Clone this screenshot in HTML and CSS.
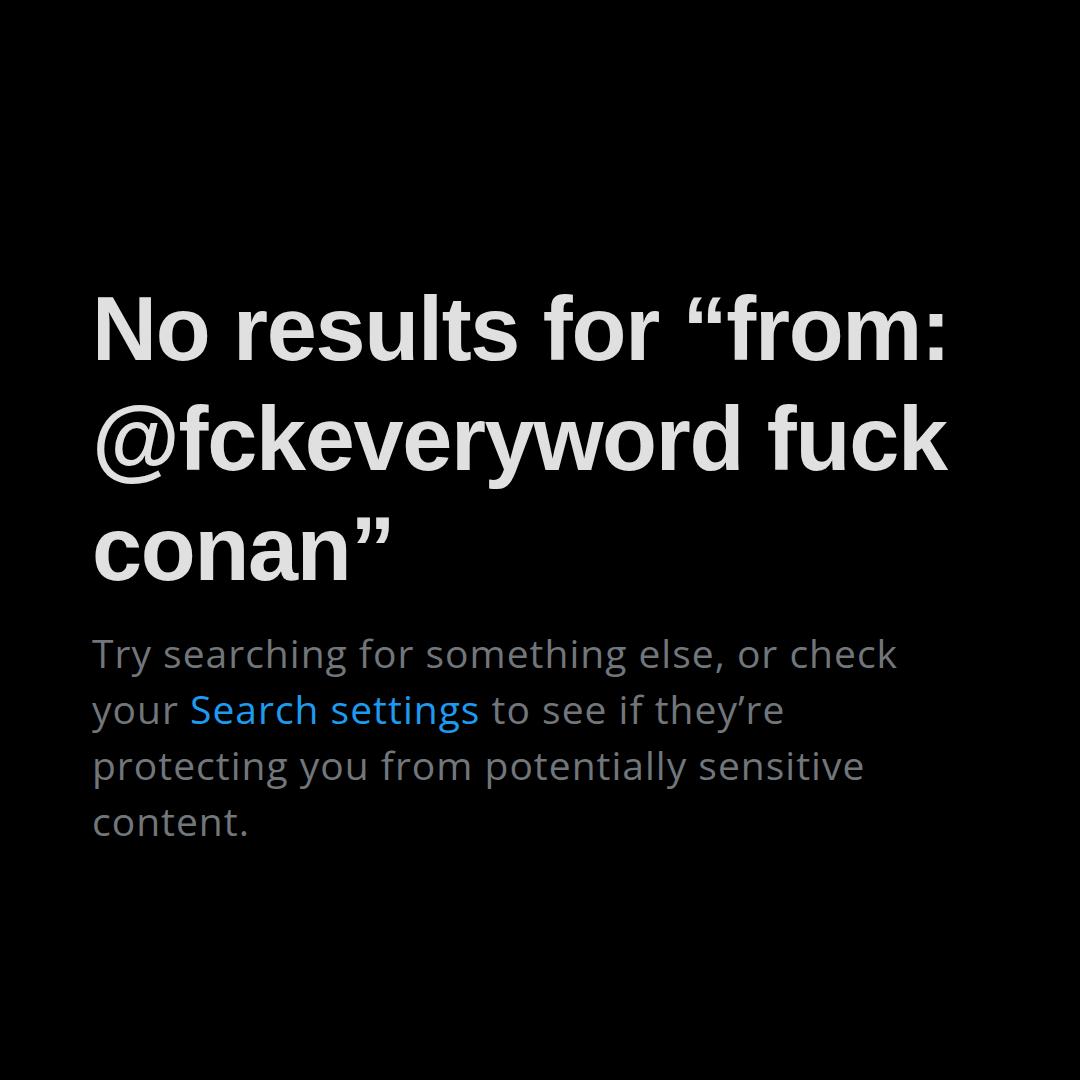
FILE: index.html
```html
<!DOCTYPE html>
<html lang="en">
<head>
    <meta charset="UTF-8">
    <meta name="viewport" content="width=device-width, initial-scale=1.0">
    <title>Search</title>
    <link rel="stylesheet" href="styles.css">
</head>
<body>
    <!-- empty search state -->
    <main class="empty-state">
        <h1 class="empty-title">No results for “from: @fckeveryword fuck conan”</h1>
        <p class="empty-text">
            Try searching for something else, or check your <a href="#" class="link">Search settings</a> to see if they’re protecting you from potentially sensitive content.
        </p>
    </main>
</body>
</html>
```

FILE: styles.css
```css
:root {
    --bg: #000000;
    --title: #e0e0e0;
    --muted: #71767b;
    --blue: #1d9bf0;
}

html, body {
    margin: 0;
    background: var(--bg);
}

body {
    width: 1080px;
    height: 1080px;
    font-family: 'Liberation Sans', Arial, sans-serif;
    overflow: hidden;
}

.empty-state {
    display: flex;
    flex-direction: column;
    gap: 21px;
    padding: 274px 0 0 92px;
    width: 880px;
}

.empty-title {
    margin: 0;
    font-size: 90px;
    line-height: 110px;
    font-weight: 700;
    color: var(--title);
    letter-spacing: -1.3px;
}

.empty-text {
    margin: 0;
    font-family: 'Open Sans', 'Noto Sans', sans-serif;
    font-size: 39px;
    line-height: 56px;
    letter-spacing: 1px;
    color: var(--muted);
    max-width: 840px;
}

.link {
    color: var(--blue);
    text-decoration: none;
}
```
